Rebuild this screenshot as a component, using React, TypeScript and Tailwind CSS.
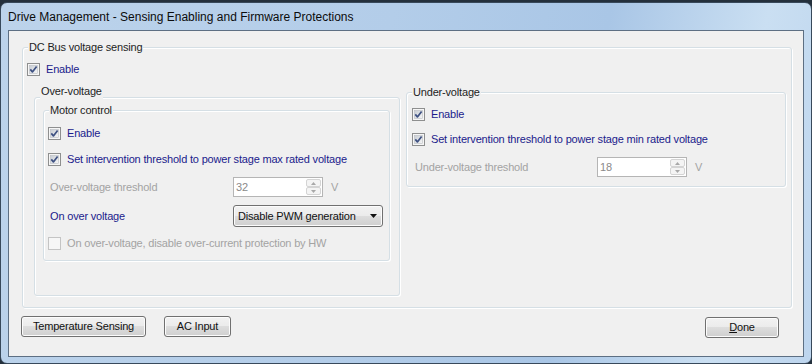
import React from 'react';

// Win7-style checkbox glyph
const CheckBox = ({ checked = true, disabled = false }: { checked?: boolean; disabled?: boolean }) => (
    <svg width="13" height="13" viewBox="0 0 13 13" className="shrink-0">
        <defs>
            <linearGradient id="cbInner" x1="0" y1="0" x2="1" y2="1">
                <stop offset="0%" stopColor="#c7ccd3" />
                <stop offset="100%" stopColor="#f7f7f7" />
            </linearGradient>
        </defs>
        <rect x="0.5" y="0.5" width="12" height="12" fill="#f6f6f6" stroke={disabled ? '#c4c4c4' : '#8e8f8f'} />
        {!disabled && <rect x="2.5" y="2.5" width="8" height="8" fill="url(#cbInner)" stroke="#b9bcc1" strokeWidth="0.6" />}
        {checked && !disabled && (
            <path d="M3.3 6.4 L5.4 8.9 L9.6 3.4" fill="none" stroke="#3e5182" strokeWidth="1.7" strokeLinejoin="round" />
        )}
    </svg>
);

const CheckRow = ({ label, disabled = false, className = '' }: { label: string; disabled?: boolean; className?: string }) => (
    <div className={`flex items-center gap-[6px] h-[13px] ${className}`}>
        <CheckBox checked={!disabled} disabled={disabled} />
        <span className={`leading-[13px] whitespace-nowrap ${disabled ? 'text-[#a3a3a3]' : 'text-[#1b1b8c]'}`}>{label}</span>
    </div>
);

const GroupBox = ({
    label,
    className = '',
    labelPos = 'top-[-7px]',
    children,
}: {
    label: string;
    className?: string;
    labelPos?: string;
    children?: React.ReactNode;
}) => (
    <div className={`relative shrink-0 rounded-[3px] border border-[#d5dfe5] shadow-[inset_1px_1px_0_#ffffff,1px_1px_0_#ffffff] ${className}`}>
        <span className={`absolute left-[5px] ${labelPos} px-[1px] bg-[#f0f0f0] leading-[13px] text-[#1e1e1e] whitespace-nowrap`}>{label}</span>
        {children}
    </div>
);

const SpinBox = ({ value }: { value: string }) => (
    <div className="flex w-[90px] h-[20px] border border-[#b5b5b5] bg-white">
        <span className="flex-1 pl-[2px] leading-[18px] text-[#8a8a8a]">{value}</span>
        <div className="flex flex-col w-[16px] py-[1px] pr-[1px]">
            <div className="flex-1 flex items-center justify-center rounded-[2px] border border-[#d4d4d4] bg-[#f4f4f4]">
                <svg width="5" height="3" viewBox="0 0 5 3"><path d="M0 3 L2.5 0 L5 3 Z" fill="#a8a8a8" /></svg>
            </div>
            <div className="flex-1 flex items-center justify-center rounded-[2px] border border-[#d4d4d4] bg-[#f4f4f4]">
                <svg width="5" height="3" viewBox="0 0 5 3"><path d="M0 0 L2.5 3 L5 0 Z" fill="#a8a8a8" /></svg>
            </div>
        </div>
    </div>
);

const Button = ({ className = '', children }: { className?: string; children?: React.ReactNode }) => (
    <div
        className={`flex items-center rounded-[3px] border border-[#707070] text-[#111] shadow-[inset_0_0_0_1px_#fcfcfc] bg-[linear-gradient(#f2f2f2_0%,#ebebeb_50%,#dddddd_50%,#cfcfcf_100%)] ${className}`}
    >
        {children}
    </div>
);

export default function App() {
    return (
        <div className="w-[812px] h-[364px] overflow-hidden bg-[#24303c] pt-[2px] font-['Liberation_Sans',Arial,sans-serif] text-[11px] tracking-[-0.18px]">
            <div className="h-[362px] flex flex-col rounded-[7px] border border-[#38495b] px-[7px] pb-[6px] bg-[linear-gradient(100deg,#bcd3eb_0%,#b3cde9_45%,#a9c6e6_70%,#cadff2_88%,#bdd5ee_100%)]">
                {/* Title bar */}
                <div className="h-[27px] shrink-0 flex items-center text-[12px] tracking-normal text-[#0c0c0c]">
                    Drive Management - Sensing Enabling and Firmware Protections
                </div>

                {/* Client area */}
                <div className="flex-1 flex flex-col border border-[#5d6f83] bg-[#f0f0f0] pt-[16px]">
                    <GroupBox label="DC Bus voltage sensing" className="ml-[13px] w-[770px] h-[261px]">
                        <div className="flex flex-col pl-[4px] pt-[15px]">
                            <CheckRow label="Enable" />
                            <div className="flex items-start">
                                {/* Over-voltage */}
                                <GroupBox
                                    label="Over-voltage"
                                    labelPos="top-[-13px] pb-[2px]"
                                    className="ml-[7px] mt-[21px] w-[366px] h-[199px]"
                                >
                                    <GroupBox label="Motor control" className="ml-[8px] mt-[12px] w-[347px] h-[151px]">
                                        <div className="flex flex-col pl-[4px] pt-[16px]">
                                            <CheckRow label="Enable" />
                                            <CheckRow label="Set intervention threshold to power stage max rated voltage" className="mt-[13px]" />
                                            <div className="flex items-center mt-[11px] pl-[2px]">
                                                <span className="w-[183px] text-[#a3a3a3]">Over-voltage threshold</span>
                                                <SpinBox value="32" />
                                                <span className="ml-[8px] text-[#a3a3a3]">V</span>
                                            </div>
                                            <div className="flex items-center mt-[8px] pl-[2px]">
                                                <span className="w-[183px] text-[#1b1b8c]">On over voltage</span>
                                                <Button className="w-[150px] h-[22px] justify-between pl-[4px] pr-[5px]">
                                                    <span>Disable PWM generation</span>
                                                    <svg width="7" height="4" viewBox="0 0 7 4"><path d="M0 0 L7 0 L3.5 4 Z" fill="#111" /></svg>
                                                </Button>
                                            </div>
                                            <CheckRow label="On over-voltage, disable over-current protection by HW" disabled className="mt-[10px]" />
                                        </div>
                                    </GroupBox>
                                </GroupBox>

                                {/* Under-voltage */}
                                <GroupBox label="Under-voltage" className="ml-[6px] mt-[16px] w-[380px] h-[95px]">
                                    <div className="flex flex-col pl-[5px] pt-[15px]">
                                        <CheckRow label="Enable" />
                                        <CheckRow label="Set intervention threshold to power stage min rated voltage" className="mt-[12px]" />
                                        <div className="flex items-center mt-[11px] pl-[3px]">
                                            <span className="w-[182px] text-[#a3a3a3]">Under-voltage threshold</span>
                                            <SpinBox value="18" />
                                            <span className="ml-[8px] text-[#a3a3a3]">V</span>
                                        </div>
                                    </div>
                                </GroupBox>
                            </div>
                        </div>
                    </GroupBox>

                    {/* Bottom buttons */}
                    <div className="flex items-start justify-between mt-[8px] pl-[12px] pr-[24px]">
                        <div className="flex gap-[18px]">
                            <Button className="w-[125px] h-[21px] justify-center">Temperature Sensing</Button>
                            <Button className="w-[67px] h-[21px] justify-center">AC Input</Button>
                        </div>
                        <Button className="w-[74px] h-[21px] mt-[1px] justify-center">
                            <span><span className="underline underline-offset-[1px]">D</span>one</span>
                        </Button>
                    </div>
                </div>
            </div>
        </div>
    );
}
